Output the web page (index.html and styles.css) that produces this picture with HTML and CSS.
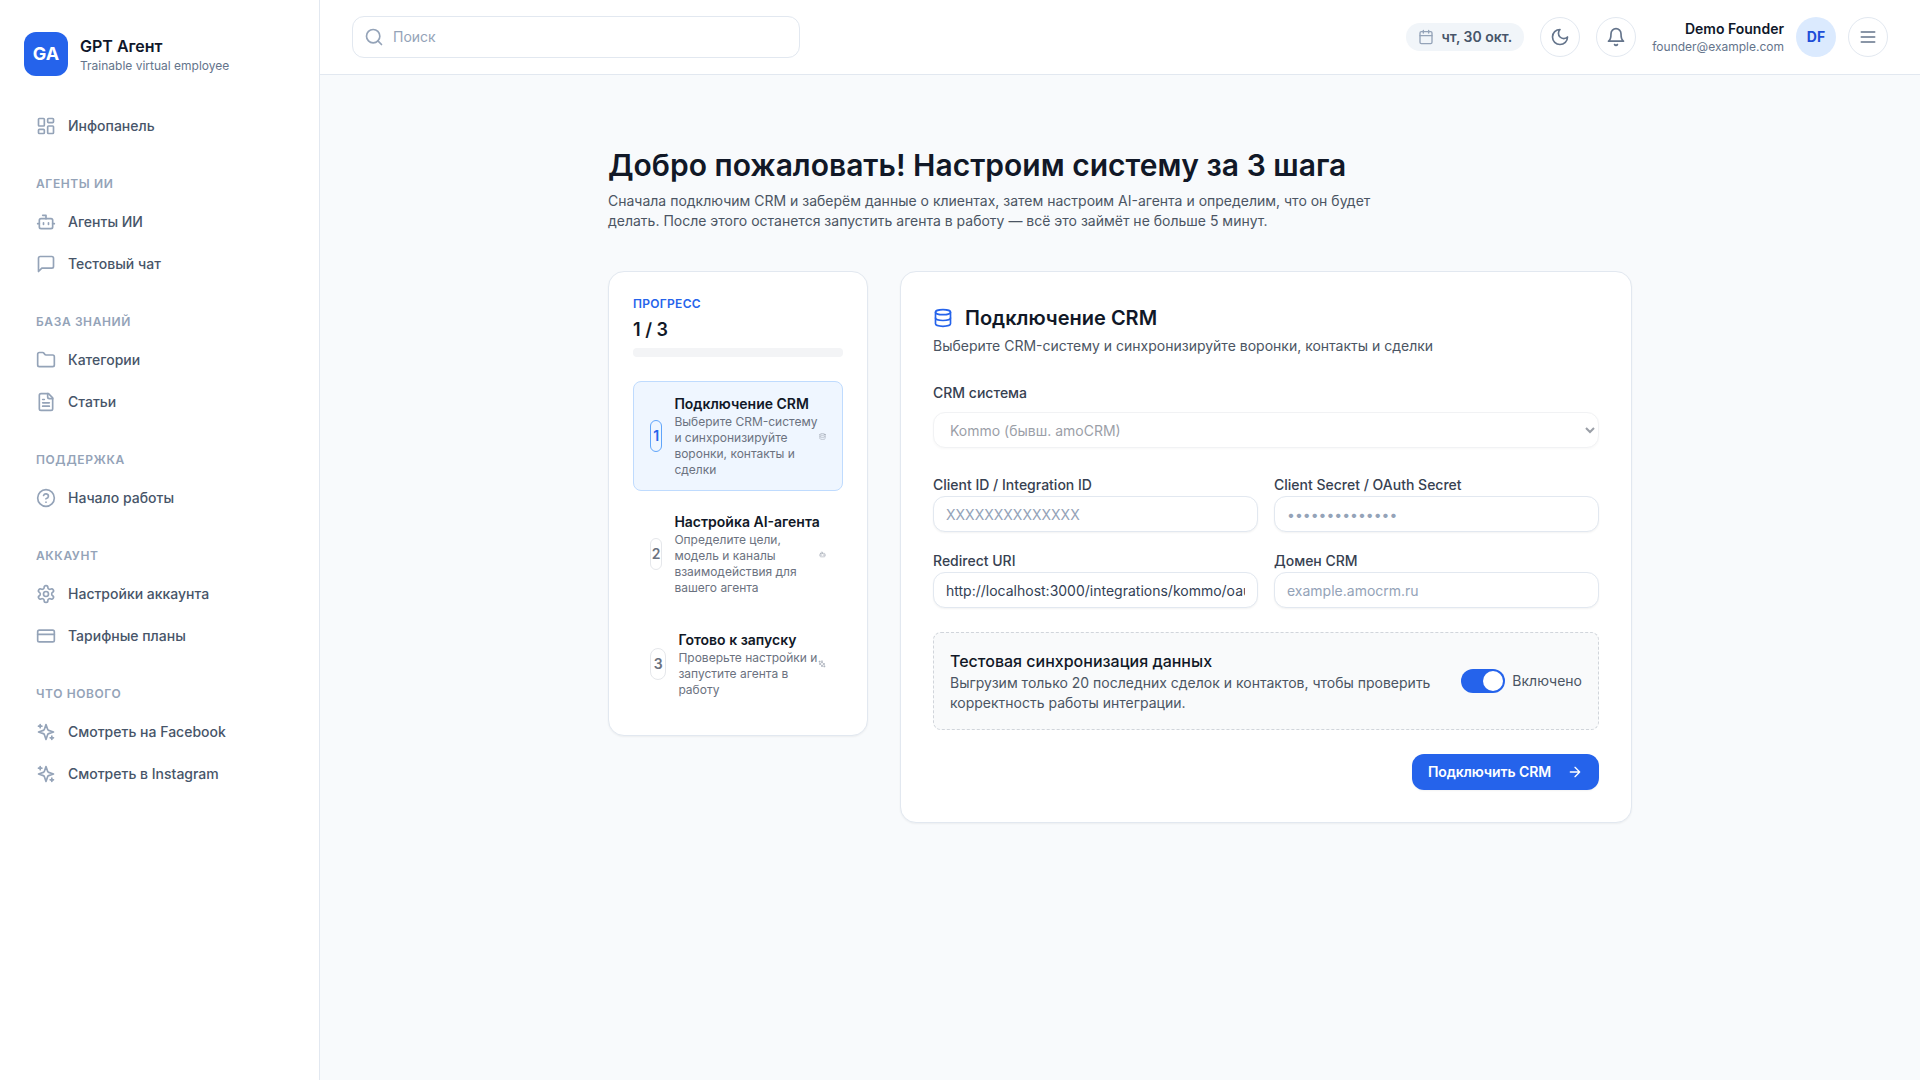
FILE: index.html
```html
<!DOCTYPE html>
<html lang="ru">
<head>
<meta charset="utf-8">
<title>GPT Агент</title>
<link rel="stylesheet" href="styles.css">
</head>
<body>
<svg class="sprite" aria-hidden="true">
  <symbol id="dashboard" viewBox="0 0 24 24"><rect width="7" height="9" x="3" y="3" rx="1"/><rect width="7" height="5" x="14" y="3" rx="1"/><rect width="7" height="9" x="14" y="12" rx="1"/><rect width="7" height="5" x="3" y="16" rx="1"/></symbol>
  <symbol id="bot" viewBox="0 0 24 24"><path d="M12 8V4H8"/><rect width="16" height="12" x="4" y="8" rx="2"/><path d="M2 14h2M20 14h2M15 13v2M9 13v2"/></symbol>
  <symbol id="message" viewBox="0 0 24 24"><path d="M21 15a2 2 0 0 1-2 2H7l-4 4V5a2 2 0 0 1 2-2h14a2 2 0 0 1 2 2z"/></symbol>
  <symbol id="folder" viewBox="0 0 24 24"><path d="M20 20a2 2 0 0 0 2-2V8a2 2 0 0 0-2-2h-7.900a2 2 0 0 1-1.690-.9L9.600 3.900A2 2 0 0 0 7.930 3H4a2 2 0 0 0-2 2v13a2 2 0 0 0 2 2Z"/></symbol>
  <symbol id="file" viewBox="0 0 24 24"><path d="M15 2H6a2 2 0 0 0-2 2v16a2 2 0 0 0 2 2h12a2 2 0 0 0 2-2V7Z"/><path d="M14 2v4a2 2 0 0 0 2 2h4M10 9H8M16 13H8M16 17H8"/></symbol>
  <symbol id="help" viewBox="0 0 24 24"><circle cx="12" cy="12" r="10"/><path d="M9.090 9a3 3 0 0 1 5.830 1c0 2-3 3-3 3M12 17h.01"/></symbol>
  <symbol id="settings" viewBox="0 0 24 24"><path d="M12.220 2h-.44a2 2 0 0 0-2 2v.18a2 2 0 0 1-1 1.730l-.43.25a2 2 0 0 1-2 0l-.15-.08a2 2 0 0 0-2.730.73l-.22.38a2 2 0 0 0 .73 2.730l.15.1a2 2 0 0 1 1 1.720v.51a2 2 0 0 1-1 1.740l-.15.09a2 2 0 0 0-.73 2.730l.22.38a2 2 0 0 0 2.730.73l.15-.08a2 2 0 0 1 2 0l.43.25a2 2 0 0 1 1 1.730V20a2 2 0 0 0 2 2h.44a2 2 0 0 0 2-2v-.18a2 2 0 0 1 1-1.730l.43-.25a2 2 0 0 1 2 0l.15.08a2 2 0 0 0 2.730-.73l.22-.39a2 2 0 0 0-.73-2.730l-.15-.08a2 2 0 0 1-1-1.740v-.5a2 2 0 0 1 1-1.740l.15-.09a2 2 0 0 0 .73-2.730l-.22-.38a2 2 0 0 0-2.730-.73l-.15.08a2 2 0 0 1-2 0l-.43-.25a2 2 0 0 1-1-1.730V4a2 2 0 0 0-2-2z"/><circle cx="12" cy="12" r="3"/></symbol>
  <symbol id="card" viewBox="0 0 24 24"><rect width="20" height="14" x="2" y="5" rx="2"/><path d="M2 10h20"/></symbol>
  <symbol id="sparkles" viewBox="0 0 24 24"><path d="m12 3-1.912 5.813a2 2 0 0 1-1.275 1.275L3 12l5.813 1.912a2 2 0 0 1 1.275 1.275L12 21l1.912-5.813a2 2 0 0 1 1.275-1.275L21 12l-5.813-1.912a2 2 0 0 1-1.275-1.275L12 3Z"/><path d="M5 3v4M19 17v4M3 5h4M17 19h4"/></symbol>
  <symbol id="search" viewBox="0 0 24 24"><circle cx="11" cy="11" r="8"/><path d="m21 21-4.300-4.300"/></symbol>
  <symbol id="calendar" viewBox="0 0 24 24"><path d="M8 2v4M16 2v4"/><rect width="18" height="18" x="3" y="4" rx="2"/><path d="M3 10h18"/></symbol>
  <symbol id="moon" viewBox="0 0 24 24"><path d="M12 3a6 6 0 0 0 9 9 9 9 0 1 1-9-9Z"/></symbol>
  <symbol id="bell" viewBox="0 0 24 24"><path d="M6 8a6 6 0 0 1 12 0c0 7 3 9 3 9H3s3-2 3-9M10.300 21a1.940 1.940 0 0 0 3.400 0"/></symbol>
  <symbol id="menu" viewBox="0 0 24 24"><path d="M4 6h16M4 12h16M4 18h16"/></symbol>
  <symbol id="database" viewBox="0 0 24 24"><ellipse cx="12" cy="5" rx="9" ry="3"/><path d="M3 5v14a9 3 0 0 0 18 0V5"/><path d="M3 12a9 3 0 0 0 18 0"/></symbol>
  <symbol id="arrow" viewBox="0 0 24 24"><path d="M5 12h14M12 5l7 7-7 7"/></symbol>
</svg>
<div class="app">
  <aside class="sidebar">
    <div class="brand">
      <div class="brand-mark">GA</div>
      <div>
        <div class="brand-name">GPT Агент</div>
        <div class="brand-sub">Trainable virtual employee</div>
      </div>
    </div>
    <nav class="nav">
      <section>
        <a class="nav-item"><svg class="icon"><use href="#dashboard"/></svg>Инфопанель</a>
      </section>
      <section>
        <h2 class="nav-title">Агенты ИИ</h2>
        <a class="nav-item"><svg class="icon"><use href="#bot"/></svg>Агенты ИИ</a>
        <a class="nav-item"><svg class="icon"><use href="#message"/></svg>Тестовый чат</a>
      </section>
      <section>
        <h2 class="nav-title">База знаний</h2>
        <a class="nav-item"><svg class="icon"><use href="#folder"/></svg>Категории</a>
        <a class="nav-item"><svg class="icon"><use href="#file"/></svg>Статьи</a>
      </section>
      <section>
        <h2 class="nav-title">Поддержка</h2>
        <a class="nav-item"><svg class="icon"><use href="#help"/></svg>Начало работы</a>
      </section>
      <section>
        <h2 class="nav-title">Аккаунт</h2>
        <a class="nav-item"><svg class="icon"><use href="#settings"/></svg>Настройки аккаунта</a>
        <a class="nav-item"><svg class="icon"><use href="#card"/></svg>Тарифные планы</a>
      </section>
      <section>
        <h2 class="nav-title">Что нового</h2>
        <a class="nav-item"><svg class="icon"><use href="#sparkles"/></svg>Смотреть на Facebook</a>
        <a class="nav-item"><svg class="icon"><use href="#sparkles"/></svg>Смотреть в Instagram</a>
      </section>
    </nav>
  </aside>
  <div class="content">
    <header class="topbar">
      <div class="search"><svg class="icon"><use href="#search"/></svg><span>Поиск</span></div>
      <div class="tools">
        <div class="date"><svg class="icon"><use href="#calendar"/></svg>чт, 30 окт.</div>
        <button class="round"><svg class="icon"><use href="#moon"/></svg></button>
        <button class="round"><svg class="icon"><use href="#bell"/></svg></button>
        <div class="profile">
          <div class="profile-text">
            <div class="profile-name">Demo Founder</div>
            <div class="profile-mail">founder@example.com</div>
          </div>
          <div class="avatar">DF</div>
          <button class="round"><svg class="icon"><use href="#menu"/></svg></button>
        </div>
      </div>
    </header>
    <main class="main">
      <h1>Добро пожаловать! Настроим систему за 3 шага</h1>
      <p class="lead">Сначала подключим CRM и заберём данные о клиентах, затем настроим AI-агента и определим, что он будет делать. После этого останется запустить агента в работу — всё это займёт не больше 5 минут.</p>
      <div class="columns">
        <section class="panel progress">
          <div class="progress-label">Прогресс</div>
          <div class="progress-value">1 / 3</div>
          <div class="track"></div>
          <div class="steps">
            <div class="step active">
              <div class="badge">1</div>
              <div class="step-text"><h3>Подключение CRM</h3><p>Выберите CRM-систему<br>и синхронизируйте<br>воронки, контакты и<br>сделки</p></div>
              <svg class="icon"><use href="#database"/></svg>
            </div>
            <div class="step">
              <div class="badge">2</div>
              <div class="step-text"><h3>Настройка AI-агента</h3><p>Определите цели,<br>модель и каналы<br>взаимодействия для<br>вашего агента</p></div>
              <svg class="icon"><use href="#bot"/></svg>
            </div>
            <div class="step">
              <div class="badge wide">3</div>
              <div class="step-text"><h3>Готово к запуску</h3><p>Проверьте настройки и<br>запустите агента в<br>работу</p></div>
              <svg class="icon large"><use href="#sparkles"/></svg>
            </div>
          </div>
        </section>
        <section class="panel form">
          <div class="form-head">
            <h2><svg class="icon"><use href="#database"/></svg>Подключение CRM</h2>
            <p>Выберите CRM-систему и синхронизируйте воронки, контакты и сделки</p>
          </div>
          <div class="field system">
            <label>CRM система</label>
            <select class="input" disabled><option>Kommo (бывш. amoCRM)</option></select>
          </div>
          <div class="fields">
            <div class="field"><label>Client ID / Integration ID</label><input class="input" placeholder="XXXXXXXXXXXXXX"></div>
            <div class="field"><label>Client Secret / OAuth Secret</label><input class="input" type="password" placeholder="••••••••••••••"></div>
            <div class="field"><label>Redirect URI</label><input class="input" value="http://localhost:3000/integrations/kommo/oauth/callback"></div>
            <div class="field"><label>Домен CRM</label><input class="input" placeholder="example.amocrm.ru"></div>
          </div>
          <div class="sync">
            <div class="sync-text">
              <h3>Тестовая синхронизация данных</h3>
              <p>Выгрузим только 20 последних сделок и контактов, чтобы проверить корректность работы интеграции.</p>
            </div>
            <div class="switch-row"><span class="switch"><span class="knob"></span></span>Включено</div>
          </div>
          <div class="actions"><button class="primary">Подключить CRM<svg class="icon"><use href="#arrow"/></svg></button></div>
        </section>
      </div>
    </main>
  </div>
</div>
</body>
</html>
```
FILE: styles.css
```css
*, *::before, *::after { box-sizing: border-box; }
body, h1, h2, h3, p { margin: 0; }
body {
  font-family: Inter, "Liberation Sans", sans-serif;
  font-size: 16px;
  line-height: 24px;
  color: #0f172a;
  background: #f8fafc;
}
button, input, select { font: inherit; margin: 0; }
.sprite { display: none; }
.icon {
  display: block;
  flex: none;
  width: 20px;
  height: 20px;
  fill: none;
  stroke: currentColor;
  stroke-width: 2;
  stroke-linecap: round;
  stroke-linejoin: round;
}
.app { display: flex; height: 100vh; overflow: hidden; }

/* Sidebar */
.sidebar {
  flex: none;
  width: 320px;
  padding: 32px 24px;
  background: #fff;
  border-right: 1px solid #e2e8f0;
}
.brand { display: flex; align-items: center; gap: 12px; margin-bottom: 29px; }
.brand-mark {
  display: grid;
  place-items: center;
  width: 44px;
  height: 44px;
  border-radius: 12px;
  background: #2563eb;
  color: #fff;
  font-size: 18px;
  font-weight: 700;
}
.brand-name { font-weight: 600; }
.brand-sub { font-size: 12px; line-height: 16px; color: #64748b; }
.nav { display: flex; flex-direction: column; gap: 29px; }
.nav-title {
  margin-bottom: 9px;
  padding: 0 12px;
  font-size: 12px;
  line-height: 16px;
  font-weight: 600;
  letter-spacing: 0.05em;
  text-transform: uppercase;
  color: #94a3b8;
}
.nav-item {
  display: flex;
  align-items: center;
  gap: 12px;
  height: 42px;
  padding: 0 12px;
  font-size: 14px;
  font-weight: 500;
  color: #475569;
}
.nav-item .icon { color: #94a3b8; }

/* Top bar */
.content { flex: 1; min-width: 0; }
.topbar {
  display: flex;
  align-items: center;
  justify-content: space-between;
  height: 75px;
  padding: 0 32px;
  background: #fff;
  border-bottom: 1px solid #e2e8f0;
}
.search {
  display: flex;
  align-items: center;
  gap: 9px;
  width: 448px;
  height: 42px;
  padding: 0 11px;
  border: 1px solid #e2e8f0;
  border-radius: 12px;
  font-size: 14px;
  color: #94a3b8;
}
.tools { display: flex; align-items: center; gap: 16px; }
.date {
  display: flex;
  align-items: center;
  gap: 8px;
  height: 28px;
  padding: 0 12px;
  border-radius: 14px;
  background: #f1f5f9;
  font-size: 14px;
  font-weight: 600;
  color: #475569;
}
.date .icon { width: 16px; height: 16px; color: #94a3b8; }
.round {
  display: grid;
  place-items: center;
  width: 40px;
  height: 40px;
  padding: 0;
  border: 1px solid #e2e8f0;
  border-radius: 50%;
  background: #fff;
  color: #64748b;
}
.profile { display: flex; align-items: center; gap: 12px; }
.profile-text { text-align: right; }
.profile-name { font-size: 14px; line-height: 20px; font-weight: 600; }
.profile-mail { font-size: 12px; line-height: 16px; color: #64748b; }
.avatar {
  display: grid;
  place-items: center;
  width: 40px;
  height: 40px;
  border-radius: 50%;
  background: #dbeafe;
  color: #1d4ed8;
  font-size: 14px;
  font-weight: 700;
}

/* Onboarding */
.main { width: 1024px; margin: 0 auto; padding-top: 72px; color: #111827; }
h1 { font-size: 30px; line-height: 36px; font-weight: 600; }
.lead {
  max-width: 768px;
  margin: 8px 0 40px;
  font-size: 14px;
  line-height: 20px;
  color: #4b5563;
}
.columns { display: grid; grid-template-columns: 260px 732px; gap: 32px; align-items: start; }
.panel {
  border: 1px solid #e2e8f0;
  border-radius: 16px;
  background: #fff;
  box-shadow: 0 1px 2px rgba(0, 0, 0, 0.05);
}
.progress { padding: 24px; }
.progress-label {
  font-size: 12px;
  line-height: 16px;
  font-weight: 600;
  letter-spacing: 0.025em;
  text-transform: uppercase;
  color: #2563eb;
}
.progress-value { margin: 4px 0; font-size: 18px; line-height: 28px; font-weight: 600; }
.track { height: 9px; border-radius: 4px; background: #f3f4f6; }
.steps { display: flex; flex-direction: column; gap: 8px; margin-top: 24px; }
.step {
  display: flex;
  align-items: center;
  padding: 12px 16px;
  border: 1px solid transparent;
  border-radius: 8px;
}
.step.active { border-color: #bfdbfe; background: #eff6ff; }
.badge {
  display: flex;
  align-items: center;
  justify-content: center;
  flex: none;
  width: 12.4px;
  height: 32px;
  margin-right: 12px;
  border: 1px solid #e5e7eb;
  border-radius: 6px;
  background: #fff;
  font-size: 14px;
  font-weight: 600;
  color: #6b7280;
}
.badge.wide { width: 16.4px; border-radius: 8px; }
.active .badge { border-color: #60a5fa; background: #eff6ff; color: #2563eb; }
.step-text { flex: 1; min-width: 0; white-space: nowrap; }
.step h3 { font-size: 14px; line-height: 20px; font-weight: 600; }
.step p { font-size: 12px; line-height: 16px; color: #6b7280; }
.step .icon { width: 7px; height: 7px; color: #9ca3af; }
.step .icon.large { width: 8px; height: 8px; }

.form { padding: 32px; }
.form-head { margin-bottom: 24px; }
.form-head h2 {
  display: flex;
  align-items: center;
  gap: 12px;
  font-size: 20px;
  line-height: 28px;
  font-weight: 600;
}
.form-head .icon { color: #2563eb; }
.form-head p { margin-top: 4px; font-size: 14px; line-height: 20px; color: #4b5563; }
.field label { font-size: 14px; line-height: 20px; font-weight: 500; color: #374151; }
.input {
  display: block;
  width: 100%;
  height: 36px;
  padding: 0 12px;
  border: 1px solid #e2e8f0;
  border-radius: 12px;
  background: #fff;
  box-shadow: 0 1px 2px rgba(0, 0, 0, 0.05);
  font-size: 14px;
  line-height: 20px;
  color: #334155;
}
.input::placeholder { color: #94a3b8; opacity: 1; }
.system .input { margin-top: 8px; opacity: 0.5; color: #374151; border-color: #e5e7eb; }
.fields { display: grid; grid-template-columns: 1fr 1fr; gap: 16px; margin: 24px 0; }
.sync {
  display: flex;
  align-items: center;
  justify-content: space-between;
  gap: 16px;
  padding: 16px;
  border: 1px dashed #d1d5db;
  border-radius: 8px;
  background: #f9fafb;
}
.sync-text { width: 490px; }
.sync h3 { font-size: 16px; line-height: 24px; font-weight: 500; }
.sync p { font-size: 14px; line-height: 20px; color: #4b5563; }
.switch-row { display: flex; align-items: center; gap: 7px; font-size: 14px; color: #4b5563; }
.switch {
  display: flex;
  justify-content: flex-end;
  width: 44px;
  height: 24px;
  padding: 2px;
  border-radius: 12px;
  background: #2563eb;
}
.knob { width: 20px; height: 20px; border-radius: 50%; background: #fff; }
.actions { display: flex; justify-content: flex-end; margin-top: 24px; }
.primary {
  display: flex;
  align-items: center;
  gap: 16px;
  height: 36px;
  padding: 0 16px;
  border: 0;
  border-radius: 12px;
  background: #2563eb;
  box-shadow: 0 1px 2px rgba(0, 0, 0, 0.05);
  color: #fff;
  font-size: 14px;
  font-weight: 600;
  letter-spacing: -0.1px;
}
.primary .icon { width: 16px; height: 16px; }
```
